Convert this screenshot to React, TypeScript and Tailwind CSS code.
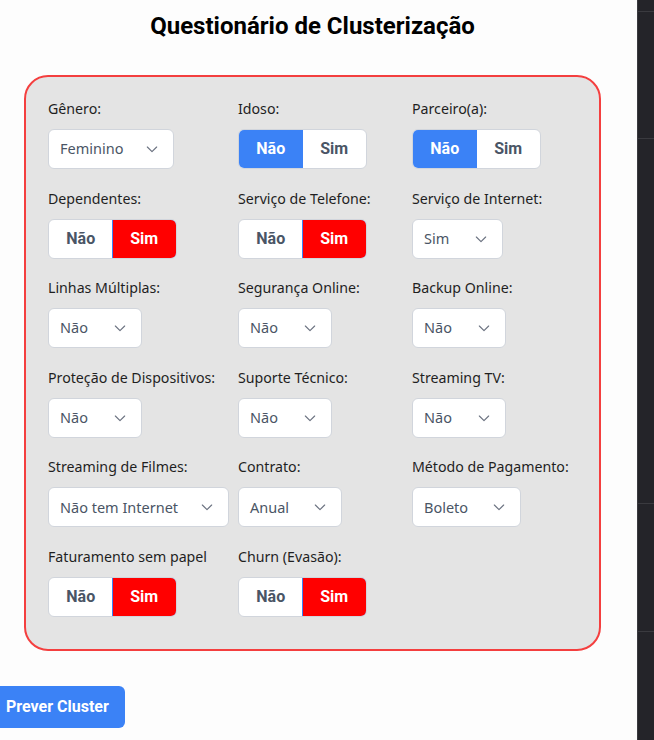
import { useState } from "react";

type Field =
  | { kind: "select"; label: string; value: string; width: string }
  | { kind: "toggle"; label: string; value: "Não" | "Sim"; tone: "blue" | "red" };

const fields: Field[] = [
  { kind: "select", label: "Gênero:", value: "Feminino", width: "w-[126px]" },
  { kind: "toggle", label: "Idoso:", value: "Não", tone: "blue" },
  { kind: "toggle", label: "Parceiro(a):", value: "Não", tone: "blue" },
  { kind: "toggle", label: "Dependentes:", value: "Sim", tone: "red" },
  { kind: "toggle", label: "Serviço de Telefone:", value: "Sim", tone: "red" },
  { kind: "select", label: "Serviço de Internet:", value: "Sim", width: "w-[91px]" },
  { kind: "select", label: "Linhas Múltiplas:", value: "Não", width: "w-[94px]" },
  { kind: "select", label: "Segurança Online:", value: "Não", width: "w-[94px]" },
  { kind: "select", label: "Backup Online:", value: "Não", width: "w-[94px]" },
  { kind: "select", label: "Proteção de Dispositivos:", value: "Não", width: "w-[94px]" },
  { kind: "select", label: "Suporte Técnico:", value: "Não", width: "w-[94px]" },
  { kind: "select", label: "Streaming TV:", value: "Não", width: "w-[94px]" },
  { kind: "select", label: "Streaming de Filmes:", value: "Não tem Internet", width: "w-[181px]" },
  { kind: "select", label: "Contrato:", value: "Anual", width: "w-[104px]" },
  { kind: "select", label: "Método de Pagamento:", value: "Boleto", width: "w-[109px]" },
  { kind: "toggle", label: "Faturamento sem papel", value: "Sim", tone: "red" },
  { kind: "toggle", label: "Churn (Evasão):", value: "Sim", tone: "red" },
];

function Chevron() {
  return (
    <svg width="16" height="16" viewBox="0 0 24 24" fill="none" stroke="#6b7280" strokeWidth="1.7" strokeLinecap="round" strokeLinejoin="round">
      <path d="M5 9l7 7 7-7" />
    </svg>
  );
}

function SelectBox({ value, width }: { value: string; width: string }) {
  return (
    <div className={`${width} h-10 flex items-center justify-between pl-[11px] pr-[13px] bg-white border border-gray-300 rounded-md text-[14.5px] text-gray-600`}>
      <span>{value}</span>
      <Chevron />
    </div>
  );
}

function Toggle({ initial, tone }: { initial: "Não" | "Sim"; tone: "blue" | "red" }) {
  const [value, setValue] = useState(initial);
  const active = tone === "blue" ? "bg-[#3b82f6] text-white" : "bg-[#ff0000] text-white";
  return (
    <div className="flex h-10 w-[129px] rounded-md border border-gray-300 bg-white overflow-hidden font-['Roboto',sans-serif] font-bold text-[16px]">
      {(["Não", "Sim"] as const).map((opt) => (
        <button
          key={opt}
          onClick={() => setValue(opt)}
          className={`flex-1 flex items-center justify-center ${
            value === opt
              ? `${active} ${tone === "red" ? "border border-[#3b82f6] -m-px" : ""}`
              : "text-gray-600"
          } ${opt === "Sim" && value === "Sim" ? "rounded-r-md" : ""}`}
        >
          {opt}
        </button>
      ))}
    </div>
  );
}

export default function App() {
  return (
    <div className="flex min-h-[740px] bg-[#fdfdfd] font-['Noto_Sans',sans-serif] text-gray-900 overflow-hidden">
      <main className="w-[625px] shrink-0 flex flex-col">
        <h1 className="mt-[11px] h-[30px] text-center text-[24px] leading-[30px] font-bold text-black font-['Roboto',sans-serif]">
          Questionário de Clusterização
        </h1>

        <section className="mt-[34px] mx-6 rounded-[24px] border-2 border-[#f43f3f] bg-[#e4e4e4] pt-[20px] pb-[32px] pl-[22px] pr-4">
          <div className="grid grid-cols-[190px_174px_auto] gap-y-[17.6px]">
            {fields.map((f) => (
              <div key={f.label} className="flex flex-col">
                <label className="text-[14.2px] leading-6 text-[#1f1f1f] mb-2">{f.label}</label>
                {f.kind === "select" ? (
                  <SelectBox value={f.value} width={f.width} />
                ) : (
                  <Toggle initial={f.value} tone={f.tone} />
                )}
              </div>
            ))}
          </div>
        </section>

        <div className="mt-[35px]">
          <button className="-ml-[10px] h-[42px] pl-4 pr-4 rounded-md bg-[#3b82f6] text-white font-bold text-[16px] font-['Roboto',sans-serif]">
            Prever Cluster
          </button>
        </div>
      </main>
      <div className="w-3 shrink-0" />
      <aside className="flex-1 bg-[#242429] border-l border-[#3a3a3f] flex flex-col">
        <div className="h-[12px] border-b border-[#3a3a3f]" />
        <div className="h-[127px] border-b border-[#3a3a3f]" />
        <div className="h-[365px] border-b border-[#3a3a3f]" />
        <div className="h-[128px] border-b border-[#3a3a3f]" />
        <div className="flex-1" />
      </aside>
    </div>
  );
}
